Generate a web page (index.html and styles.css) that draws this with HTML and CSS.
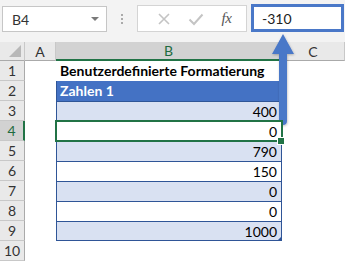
FILE: index.html
```html
<!DOCTYPE html>
<html>
<head>
<meta charset="utf-8">
<link rel="stylesheet" href="styles.css">
</head>
<body>
<div class="app">
  <div class="toolbar">
    <div class="namebox"><span>B4</span><span class="dd"></span></div>
    <div class="dots"><i></i><i></i><i></i></div>
    <div class="btns">
      <svg class="ic" width="14" height="14" viewBox="0 0 14 14"><path d="M2 2 L12 12 M12 2 L2 12" stroke="#c4c4c4" stroke-width="1.6" fill="none"/></svg>
      <svg class="ic" width="16" height="14" viewBox="0 0 16 14"><path d="M1.5 7.5 L6 12 L14.5 2.5" stroke="#c4c4c4" stroke-width="2" fill="none"/></svg>
      <span class="fx">fx</span>
    </div>
    <div class="fbox">-310</div>
  </div>
  <div class="sheet">
    <div class="corner"><span class="tri"></span></div>
    <div class="ch">A</div>
    <div class="ch sel">B</div>
    <div class="ch">C</div>

    <div class="rh">1</div><div class="c"></div><div class="c title">Benutzerdefinierte Formatierung</div><div class="c"></div>
    <div class="rh">2</div><div class="c"></div><div class="c thead">Zahlen 1</div><div class="c"></div>
    <div class="rh">3</div><div class="c"></div><div class="c td band">400</div><div class="c"></div>
    <div class="rh rsel">4</div><div class="c"></div><div class="c td active">0</div><div class="c"></div>
    <div class="rh">5</div><div class="c"></div><div class="c td band">790</div><div class="c"></div>
    <div class="rh">6</div><div class="c"></div><div class="c td">150</div><div class="c"></div>
    <div class="rh">7</div><div class="c"></div><div class="c td band">0</div><div class="c"></div>
    <div class="rh">8</div><div class="c"></div><div class="c td">0</div><div class="c"></div>
    <div class="rh">9</div><div class="c"></div><div class="c td band last">1000</div><div class="c"></div>
    <div class="rh">10</div><div class="c"></div><div class="c"></div><div class="c"></div>
  </div>
  <svg class="arrow" width="30" height="100" viewBox="0 0 30 100">
    <defs>
      <filter id="sh" x="-50%" y="-20%" width="200%" height="140%">
        <feDropShadow dx="0.5" dy="1" stdDeviation="1" flood-color="#000" flood-opacity="0.25"/>
      </filter>
    </defs>
    <path d="M15 1 L26 21 L19 21 L19 88 Q19 92 15 92 Q11 92 11 88 L11 21 L4 21 Z" fill="#4a78c8" filter="url(#sh)"/>
  </svg>
</div>
</body>
</html>
```
FILE: styles.css
```css
* { box-sizing: border-box; }
html, body { margin: 0; padding: 0; }
body {
  width: 345px;
  height: 262px;
  overflow: hidden;
  background: #fff;
  font-family: Lato, "Open Sans", sans-serif;
}
.app { position: relative; width: 345px; height: 262px; }

.toolbar {
  height: 42px;
  background: #f3f3f3;
  display: flex;
  align-items: flex-start;
  padding: 4px 1px 0 2px;
}
.namebox {
  margin-top: 2px;
  width: 105px;
  height: 26px;
  background: #fff;
  border: 1px solid #c6c6c6;
  display: flex;
  align-items: center;
  justify-content: space-between;
  padding: 0 7px 0 9px;
  font-size: 14px;
  color: #333;
}
.dd {
  width: 0; height: 0;
  border-left: 4px solid transparent;
  border-right: 4px solid transparent;
  border-top: 4px solid #7a7a7a;
}
.dots {
  width: 30px;
  height: 26px;
  display: flex;
  flex-direction: column;
  align-items: center;
  justify-content: center;
  gap: 2px;
  margin-top: 2px;
}
.dots i { display: block; width: 2px; height: 2px; background: #aaa; }
.btns {
  width: 110px;
  height: 27px;
  margin-top: 1px;
  background: #fff;
  border: 1px solid #d4d4d4;
  display: flex;
  align-items: center;
  justify-content: space-around;
  padding: 0 6px 0 10px;
}
.fx {
  font-family: "Liberation Serif", serif;
  font-style: italic;
  font-size: 15px;
  color: #555;
  letter-spacing: -0.5px;
}
.fbox {
  margin-left: 4px;
  width: 93px;
  height: 28px;
  border: 3px solid #4a78c8;
  background: #fff;
  font-size: 14px;
  color: #222;
  padding: 3px 0 0 8px;
}

.sheet {
  display: grid;
  grid-template-columns: 25px 31px 226px 63px;
  grid-template-rows: 19px repeat(10, 20px);
  font-size: 14px;
}
.corner {
  background: #e9e9e9;
  border-right: 1px solid #c8c8c8;
  border-bottom: 1px solid #aaa;
  position: relative;
}
.tri {
  position: absolute;
  right: 3px; bottom: 3px;
  width: 0; height: 0;
  border-left: 12px solid transparent;
  border-bottom: 12px solid #b8b8b8;
}
.ch {
  background: #e9e9e9;
  border-right: 1px solid #c8c8c8;
  border-bottom: 1px solid #aaa;
  display: flex;
  align-items: center;
  justify-content: center;
  color: #333;
  font-size: 14px;
}
.ch.sel {
  background: #d2d2d2;
  border-bottom: 2px solid #217346;
  color: #1e6b40;
}
.rh {
  background: #e9e9e9;
  border-right: 1px solid #aaa;
  border-bottom: 1px solid #c8c8c8;
  display: flex;
  align-items: center;
  justify-content: center;
  color: #333;
  font-size: 14px;
}
.rh.rsel {
  background: #d2d2d2;
  border-right: 2px solid #217346;
  color: #1e6b40;
}
.c { background: #fff; }
.title {
  font-weight: bold;
  color: #000;
  padding: 1px 0 0 4px;
  white-space: nowrap;
}
.thead {
  background: #4472c4;
  color: #fff;
  font-weight: bold;
  padding: 1px 0 0 3px;
  border-left: 1px solid #2f5597;
  border-right: 1px solid #2f5597;
}
.td {
  text-align: right;
  padding: 1px 4px 0 0;
  border-left: 1px solid #2f5597;
  border-right: 1px solid #2f5597;
  border-top: 1px solid #2f5597;
  color: #000;
}
.band { background: #d9e1f2; }
.last { border-bottom: 1px solid #2f5597; position: relative; }
.last::after {
  content: "";
  position: absolute;
  right: -1px; bottom: -1px;
  width: 0; height: 0;
  border-left: 5px solid transparent;
  border-bottom: 5px solid #2f5597;
}
.active {
  position: relative;
  background: #fff;
  outline: 2px solid #217346;
  outline-offset: -1px;
  z-index: 1;
}
.active::after {
  content: "";
  position: absolute;
  right: -4px; bottom: -4px;
  width: 6px; height: 6px;
  background: #217346;
  border: 1px solid #fff;
}
.arrow {
  position: absolute;
  left: 268px;
  top: 33px;
}
```
